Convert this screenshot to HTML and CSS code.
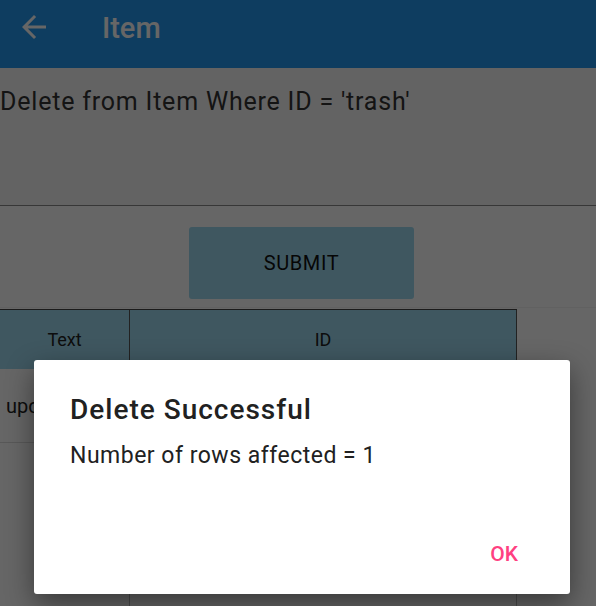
FILE: index.html
```html
<!DOCTYPE html>
<html>
<head>
<meta charset="utf-8">
<link rel="stylesheet" href="styles.css">
</head>
<body>
<div class="screen">
  <header class="appbar">
    <svg class="back" width="36" height="36" viewBox="0 0 24 24"><path d="M20 11H7.83l5.59-5.59L12 4l-8 8 8 8 1.41-1.41L7.83 13H20v-2z" fill="#ffffff"/></svg>
    <span class="title">Item</span>
  </header>
  <div class="query">Delete from Item Where ID = 'trash'</div>
  <div class="submit-row">
    <button class="submit">SUBMIT</button>
  </div>
  <div class="table">
    <div class="row head">
      <div class="cell c1">Text</div>
      <div class="cell c2">ID</div>
    </div>
    <div class="row">
      <div class="cell c1 left">update</div>
      <div class="cell c2"></div>
    </div>
    <div class="row last">
      <div class="cell c1"></div>
      <div class="cell c2"></div>
    </div>
  </div>
</div>
<div class="scrim"></div>
<div class="dialog">
  <h2 class="d-title">Delete Successful</h2>
  <p class="d-body">Number of rows affected = 1</p>
  <div class="d-actions"><span class="ok">OK</span></div>
</div>
</body>
</html>
```
FILE: styles.css
```css
* { box-sizing: border-box; }
html, body { margin: 0; padding: 0; }
body {
  width: 596px;
  height: 606px;
  overflow: hidden;
  font-family: Roboto, "Noto Sans", sans-serif;
  background: #ffffff;
  position: relative;
}
.screen { display: flex; flex-direction: column; height: 606px; overflow: hidden; }
.appbar {
  height: 68px;
  flex: none;
  background: #2599f0;
  display: flex;
  align-items: center;
  padding-left: 16px;
}
.back { margin-top: -14px; }
.title {
  color: #ffffff;
  font-size: 29px;
  font-weight: 500;
  margin-left: 50px;
  margin-top: -13px;
}
.query {
  height: 138px;
  flex: none;
  background: #f8f8f8;
  border-bottom: 1px solid #8a8a8a;
  font-size: 25px;
  letter-spacing: 0.8px;
  color: #333;
  padding-top: 19px;
  padding-left: 0;
}
.submit-row {
  height: 102px;
  flex: none;
  display: flex;
  align-items: flex-start;
  padding-top: 21px;
  padding-left: 189px;
  border-bottom: 1px solid #f2f2f2;
}
.submit {
  width: 225px;
  height: 72px;
  background: #9edaf0;
  border: none;
  border-radius: 3px;
  font-family: Roboto, sans-serif;
  font-size: 20px;
  letter-spacing: 0.6px;
  font-weight: 400;
  color: #111;
  padding: 0;
}
.table {
  width: 517px;
  flex: 1;
  display: flex;
  flex-direction: column;
  border-top: 1px solid #444;
  margin-top: 1px;
}
.row { display: flex; height: 74px; flex: none; border-bottom: 1px solid #ddd; }
.row.head { height: 59px; background: #9edaf0; border-bottom: none; }
.row.last { flex: 1; height: auto; border-bottom: none; }
.cell {
  display: flex;
  align-items: center;
  justify-content: center;
  font-size: 18px;
  color: #222;
}
.c1 { width: 130px; border-right: 1px solid #555; }
.row:not(.head) .c1 { border-right-color: #bbb; }
.c2 { width: 387px; border-right: 1px solid #555; }
.row:not(.head) .c2 { border-right-color: #bbb; }
.cell.left { justify-content: flex-start; padding-left: 6px; font-size: 20px; }
.scrim {
  position: absolute;
  inset: 0;
  background: rgba(0, 0, 0, 0.6);
}
.dialog {
  position: absolute;
  left: 34px;
  top: 360px;
  width: 536px;
  height: 234px;
  background: #fff;
  border-radius: 3px;
  box-shadow: 0 10px 28px rgba(0, 0, 0, 0.45);
  padding: 32px 36px 0 36px;
  display: flex;
  flex-direction: column;
}
.d-title {
  margin: 0;
  font-size: 28px;
  letter-spacing: 1px;
  font-weight: 500;
  color: #212121;
  line-height: 36px;
}
.d-body {
  margin: 13px 0 0 0;
  font-size: 23px;
  letter-spacing: 0.5px;
  color: #212121;
  line-height: 30px;
}
.d-actions {
  margin-top: auto;
  display: flex;
  justify-content: flex-end;
  padding-right: 16px;
  height: 52px;
}
.ok {
  color: #ff4081;
  font-size: 21px;
  font-weight: 500;
}
```
